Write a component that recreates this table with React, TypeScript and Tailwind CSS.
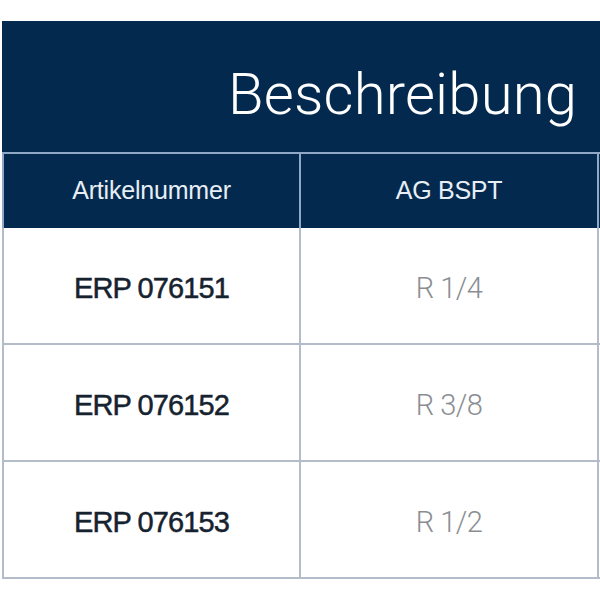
const rows = [
  { id: "ERP 076151", size: "R 1/4" },
  { id: "ERP 076152", size: "R 3/8" },
  { id: "ERP 076153", size: "R 1/2" },
];

export default function App() {
  return (
    <div className="w-[600px] h-[600px] overflow-hidden bg-white pt-[21px] pl-[2px] font-['Liberation_Sans',Arial,sans-serif]">
      <div className="w-[800px]">
        {/* title band */}
        <div className="h-[131px] bg-[#032a4e] pl-[226px] pt-[44px]">
          <span className="font-['Roboto',sans-serif] font-light text-[58px] leading-none tracking-[0.2px] text-white">
            Beschreibung
          </span>
        </div>

        {/* column headers */}
        <div className="grid grid-cols-[297px_298px_205px] h-[76px] bg-[#032a4e] border-t-2 border-l-2 border-[#8fa8c6]">
          <div className="flex items-center justify-center border-r-2 border-[#8fa8c6] text-[25px] tracking-[-0.2px] text-[#e8eef5]">
            Artikelnummer
          </div>
          <div className="flex items-center justify-center border-r-2 border-[#8fa8c6] text-[25px] tracking-[-0.3px] text-[#e8eef5]">
            AG BSPT
          </div>
          <div />
        </div>

        {/* body rows */}
        {rows.map((r) => (
          <div
            key={r.id}
            className="grid grid-cols-[297px_298px_205px] h-[117px] border-l-2 border-b-2 border-[#b3bcc8]"
          >
            <div className="flex items-center justify-center pt-[6px] border-r-2 border-[#b3bcc8] text-[29px] tracking-[-0.9px] text-[#16232f] [-webkit-text-stroke:0.5px_#16232f]">
              {r.id}
            </div>
            <div className="flex items-center justify-center pt-[6px] border-r-2 border-[#b3bcc8] font-['Roboto',sans-serif] font-light text-[29px] tracking-[-0.5px] text-[#8a8e93]">
              {r.size}
            </div>
            <div />
          </div>
        ))}
      </div>
    </div>
  );
}
